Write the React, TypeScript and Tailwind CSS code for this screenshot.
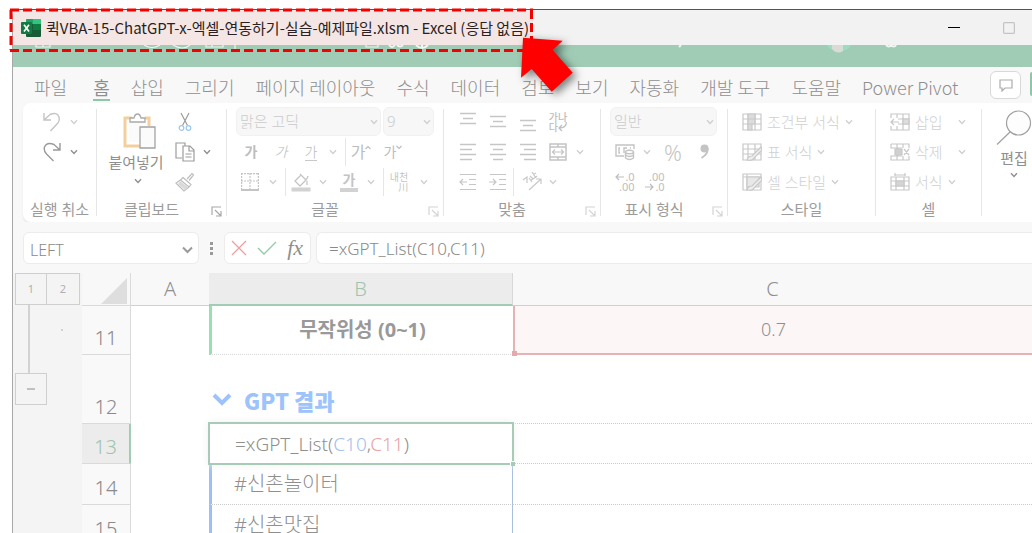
import React from "react";

type Kids = { children?: React.ReactNode };

function Svg({ w, h, className = "", sw = 1.2, children }: Kids & { w: number; h: number; className?: string; sw?: number }) {
  return (
    <svg width={w} height={h} viewBox={`0 0 ${w} ${h}`} fill="none" stroke="currentColor" strokeWidth={sw} className={`shrink-0 ${className}`} aria-hidden="true">
      {children}
    </svg>
  );
}

function Chevron({ className = "text-[#d0d0d0]" }: { className?: string }) {
  return (
    <Svg w={8} h={6} sw={1.4} className={className}>
      <path d="M1 1.2 4 4.4 7 1.2" />
    </Svg>
  );
}

function Tool({ label, className = "w-[30px]", children }: Kids & { label: string; className?: string }) {
  return (
    <button type="button" aria-label={label} className={`flex h-[30px] shrink-0 items-center justify-center ${className}`}>
      {children}
    </button>
  );
}

function Drop({ label, className = "w-[14px]", color }: { label: string; className?: string; color?: string }) {
  return (
    <Tool label={label} className={className}>
      <Chevron className={color} />
    </Tool>
  );
}

function Group({ title, className, launcher, launcherColor = "text-[#d4d4d4]", children }: Kids & { title: string; className: string; launcher?: boolean; launcherColor?: string }) {
  return (
    <section aria-label={title} className={`flex shrink-0 flex-col pt-1 ${className}`}>
      <div className="flex h-[92px] flex-col">{children}</div>
      <div className={`relative flex h-5 items-center justify-center text-[15px] leading-5 font-normal text-[#9b9b9b] ${launcher ? "pr-5" : ""}`}>
        {title}
        {launcher && (
          <button type="button" aria-label={`${title} 설정`} className={`absolute right-1 bottom-[2px] ${launcherColor}`}>
            <Svg w={11} h={11}>
              <path d="M1 9V1h9M4 4l5.5 5.5M10 5v5H5" />
            </Svg>
          </button>
        )}
      </div>
    </section>
  );
}

function Divider() {
  return <div className="mt-[6px] h-[107px] w-px shrink-0 bg-[#e6e6e6]" />;
}

function SmallDivider() {
  return <div className="h-7 w-px shrink-0 bg-[#e6e6e6]" />;
}

function Picker({ label, value, className }: { label: string; value: string; className: string }) {
  return (
    <div className={`relative h-[29px] shrink-0 ${className}`}>
      <select aria-label={label} defaultValue={value} className="h-full w-full appearance-none rounded-md border border-[#f1f1f1] bg-[#f7f7f7] pl-[3px] text-[15px] font-light text-[#cbcbcb]">
        <option>{value}</option>
      </select>
      <span className="pointer-events-none absolute top-3 right-[3px]">
        <Chevron />
      </span>
    </div>
  );
}

function Lines({ rows }: { rows: [number, number, number][] }) {
  return (
    <Svg w={18} h={20} sw={1.3} className="text-[#c6c6c6]">
      {rows.map(([y, a, b]) => (
        <path key={y} d={`M${a} ${y}.5H${b}`} />
      ))}
    </Svg>
  );
}

function GridIcon({ children }: Kids) {
  return (
    <Svg w={20} h={18} className="text-[#c8c8c8]">
      {children}
    </Svg>
  );
}

const tabs = ["파일", "홈", "삽입", "그리기", "페이지 레이아웃", "수식", "데이터", "검토", "보기", "자동화", "개발 도구", "도움말", "Power Pivot"];

function TitleBar() {
  return (
    <header className="relative flex h-[35px] shrink-0 items-center bg-[#f2f2f2]">
      <div className="flex h-full w-[520px] shrink-0 items-center gap-[5px] rounded-tl-md bg-[#f5e6e6] pl-2 font-['Noto_Sans_CJK_KR',sans-serif] text-[15px] leading-5 whitespace-nowrap text-[#2a1f22]">
        <svg width="20" height="18" viewBox="0 0 20 18" className="shrink-0" aria-hidden="true">
          <path fill="#21a366" d="M6 0h13a1 1 0 0 1 1 1v5H5V1a1 1 0 0 1 1-1" />
          <path fill="#33c481" d="M12 0h7a1 1 0 0 1 1 1v4h-8z" />
          <path fill="#107c41" d="M12 5h8v6h-8z" />
          <path fill="#185c37" d="M5 5h7v6h8v6a1 1 0 0 1-1 1H6a1 1 0 0 1-1-1z" />
          <rect y="3" width="11" height="12" rx="1" fill="#107c41" />
          <path stroke="#fff" strokeWidth="1.7" d="m3 5.8 5 6.6M8 5.8l-5 6.6" />
        </svg>
        <h1>퀵VBA-15-ChatGPT-x-엑셀-연동하기-실습-예제파일.xlsm - Excel (응답 없음)</h1>
      </div>
      <div className="-mr-1 ml-auto flex">
        <button type="button" aria-label="최소화" className="flex h-8 w-[55px] items-center justify-center text-black">
          <Svg w={12} h={12} sw={1}><path d="M0 5.5h12" /></Svg>
        </button>
        <button type="button" aria-label="최대화" className="flex h-8 w-[55px] items-center justify-center text-[#c4c4c4]">
          <Svg w={12} h={12}><rect x=".6" y=".6" width="10.8" height="10.8" rx="1" /></Svg>
        </button>
      </div>
    </header>
  );
}

function QuickBar() {
  return (
    <div className="h-[22px] shrink-0 overflow-hidden bg-[#a0ccb5]">
      <svg width="900" height="10" viewBox="0 0 900 10" fill="none" stroke="#eef7f1" strokeWidth="1.2" aria-hidden="true">
        <path d="M23 0v2h14V0M30 0v2M131 0q8 5 16 0M160 0q10 6 17 0M193 0v2h17V0M199 0v2M222 0v6M353 0v2h12V0" />
        <path d="M376 0q3 4 6 0M384 0q3 3 6 0M403 0q6 6 12 0M409 0v3M666 2l2-2" strokeWidth="2" />
        <path d="M873 0q3 3 5 0q3 3 5 0" strokeWidth="2" />
        <path d="M814 0a13 10 0 0 0 24 0z" fill="#96e0c0" stroke="none" />
        <path d="M819 0h11v6q-6 4-11-2z" fill="#d9dcd6" stroke="none" />
      </svg>
    </div>
  );
}

function TabBar() {
  return (
    <nav className="flex h-9 shrink-0 items-start bg-[#f8f8f8] pl-[21px]">
      <div className="flex gap-[21px] pt-2 font-['Noto_Sans_CJK_KR',sans-serif] text-[18px] leading-6 font-light whitespace-nowrap text-[#8f8f8f]">
        {tabs.map((t) => (
          <a key={t} href="#" className={t === "홈" ? "ml-[5px] border-b-2 border-[#8cc7a8] font-normal" : "border-b-2 border-transparent"}>
            {t}
          </a>
        ))}
      </div>
      <button type="button" aria-label="메모" className="mt-1 ml-auto flex h-7 w-[31px] shrink-0 items-center justify-center rounded-md border border-[#d8d8d8] bg-white text-[#ababab]">
        <Svg w={14} h={13}><path d="M1 1h12v8H6l-3 3V9H1z" /></Svg>
      </button>
      <button type="button" aria-label="공유" className="mt-[5px] ml-[9px] h-6 w-[2px] shrink-0 rounded-l bg-[#8cc7a8]" />
    </nav>
  );
}

const L = 1, R = 17;

function Ribbon() {
  return (
    <div className="ml-[10px] flex h-[119px] shrink-0 overflow-hidden rounded-l-lg bg-white shadow-[0_2px_2px_#e9e9e9]">
      <Group title="실행 취소" className="w-[73px]">
        <div className="flex pl-[14px]">
          <Tool label="실행 취소" className="w-[30px] text-[#c4c4c4]">
            <Svg w={20} h={20} sw={1.4}><path d="M2 1v7h7M2 8l6-5.500q7-3 9 2.500 1 4-2 7L8.500 19" /></Svg>
          </Tool>
          <Drop label="실행 취소 목록" />
        </div>
        <div className="flex pl-[14px]">
          <Tool label="다시 실행" className="w-[30px] text-[#999999]">
            <Svg w={20} h={20} sw={1.4}><path d="M18 1v7h-7M18 8l-6-5.500q-7-3-9.500 2.500-1 4 2 7l7 7" /></Svg>
          </Tool>
          <Drop label="다시 실행 목록" color="text-[#8f8f8f]" />
        </div>
      </Group>
      <Divider />
      <Group title="클립보드" className="w-[129px]" launcher launcherColor="text-[#a8a8a8]">
        <div className="flex pl-[9px]">
          <button type="button" className="flex w-[60px] flex-col items-center pt-[6px] text-[15px] leading-5 whitespace-nowrap text-[#8f8f8f]">
            <Svg w={34} h={37} sw={1.3} className="mb-[2px] ml-2">
              <path d="M9 5H2v28h15M22 5h4v8" stroke="#f3cf9e" strokeWidth="3" />
              <path d="M6 9v20h10V13h7V9z" fill="#fbfbfb" stroke="none" />
              <path d="M7 9V5h4q1-4 3.500-4T18 5h4v4z" fill="#fff" stroke="#aaa" />
              <path d="M17 14h15v21H17z" fill="#fbfbfb" stroke="#a3a3a3" />
            </Svg>
            붙여넣기
            <Chevron className="mt-[6px] ml-1 text-[#8f8f8f]" />
          </button>
          <div className="ml-[6px] flex flex-col">
            <Tool label="잘라내기" className="w-[26px] text-[#9c9c9c]">
              <Svg w={14} h={20}>
                <path d="M3 1l6.500 12.500M11 1 4.500 13.500" />
                <circle cx="3.500" cy="16" r="2.300" stroke="#9dc8ee" /><circle cx="10.500" cy="16" r="2.300" stroke="#9dc8ee" />
              </Svg>
            </Tool>
            <Tool label="복사" className="w-[26px] text-[#9c9c9c]">
              <Svg w={20} h={20}>
                <path d="M7 16H1V1h9v3M8 4h7l4 4v11H8zM14 4v5h5M10.500 12h6M10.500 15h6" />
              </Svg>
            </Tool>
            <Tool label="서식 복사" className="w-[26px] text-[#bdbdbd]">
              <Svg w={20} h={20}>
                <path d="m12 7 5-5.500 1.500 1.500L14 8.500M8 5.500l8 7-2 2.500-8.500-7zM5.500 8 1 11l8 8 5-4" />
                <path d="m3 12 7 6 3-3-8-6z" fill="#dadada" stroke="none" />
              </Svg>
            </Tool>
          </div>
          <Drop label="복사 옵션" className="mt-[30px] w-[18px]" color="text-[#8f8f8f]" />
        </div>
      </Group>
      <Divider />
      <Group title="글꼴" className="w-[216px]" launcher>
        <div className="flex h-[30px] gap-[2px] pl-[9px]">
          <Picker label="글꼴" value="맑은 고딕" className="w-[145px]" />
          <Picker label="글꼴 크기" value="9" className="w-[51px]" />
        </div>
        <div className="flex items-center pl-[9px] text-[14px] leading-4 text-[#bdbdbd]">
          <Tool label="굵게"><b>가</b></Tool>
          <Tool label="기울임꼴"><i className="font-light">가</i></Tool>
          <Tool label="밑줄"><span className="border-b border-[#c8c8c8] font-light">가</span></Tool>
          <Drop label="밑줄 종류" className="mr-[5px] w-[14px]" />
          <SmallDivider />
          <Tool label="글꼴 크기 크게"><span className="text-[16px]">가</span><Svg w={6} h={14}><path d="M.5 4 3 1.500 5.500 4" /></Svg></Tool>
          <Tool label="글꼴 크기 작게" className="w-[34px]">가<Svg w={6} h={14}><path d="M.5 1 3 3.500 5.500 1" /></Svg></Tool>
        </div>
        <div className="flex items-center pl-[9px] text-[#c4c4c4]">
          <Tool label="테두리" className="w-7">
            <Svg w={18} h={18}>
              <path d="M.6 0v16M9 0v16M17.400 0v16M0 .6h18M0 8h18" strokeDasharray="2 1" /><path d="M0 17h18" strokeWidth="2" />
            </Svg>
          </Tool>
          <Drop label="테두리 종류" className="mr-[3px] w-[18px]" />
          <SmallDivider />
          <Tool label="채우기 색">
            <Svg w={20} h={20} sw={1.3}>
              <path d="m9 2 6 6-6 6-5-5 6-6M15 8q2-3 2-4M16 9v4" /><path d="M.5 17.500h19" strokeWidth="4" stroke="#d2d2d2" />
            </Svg>
          </Tool>
          <Drop label="채우기 색 목록" className="mr-1 w-[14px]" />
          <Tool label="글꼴 색">
            <span className="border-b-4 border-[#d2d2d2] px-[3px] text-[14px] leading-4 font-bold">가</span>
          </Tool>
          <Drop label="글꼴 색 목록" className="mr-[5px] w-[14px]" />
          <SmallDivider />
          <Tool label="윗주">
            <span className="flex flex-col items-end text-[10px] leading-[10px]"><span>내천</span><span>川</span></span>
          </Tool>
          <Drop label="윗주 옵션" className="w-5" />
        </div>
      </Group>
      <Divider />
      <Group title="맞춤" className="w-[156px]" launcher>
        <div className="flex pl-[9px]">
          <Tool label="위쪽 맞춤"><Lines rows={[[1, L, R], [6, 4, 14], [11, L, R]]} /></Tool>
          <Tool label="가운데 맞춤"><Lines rows={[[4, L, R], [9, 4, 14], [14, L, R]]} /></Tool>
          <Tool label="아래쪽 맞춤"><Lines rows={[[8, L, R], [13, 4, 14], [18, L, R]]} /></Tool>
          <Tool label="텍스트 줄 바꿈">
            <span className="flex flex-col text-[10px] leading-[10px] font-medium text-[#bdbdbd]">
              <span>가나</span>
              <span className="flex">다<Svg w={9} h={10}><path d="M8.400 0q0 6-7 6M4 3 1 6l3 3" /></Svg></span>
            </span>
          </Tool>
        </div>
        <div className="flex pl-[9px]">
          <Tool label="왼쪽 맞춤"><Lines rows={[[2, L, R], [7, L, 13], [12, L, R], [17, L, 13]]} /></Tool>
          <Tool label="가운데"><Lines rows={[[2, L, R], [7, 4, 14], [12, L, R], [17, 4, 14]]} /></Tool>
          <Tool label="오른쪽 맞춤"><Lines rows={[[2, L, R], [7, 5, R], [12, L, R], [17, 5, R]]} /></Tool>
          <Tool label="병합하고 가운데 맞춤">
            <Svg w={18} h={18} className="text-[#c4c4c4]">
              <path d="M1 1h16v16H1zM1 4h16M1 14h16M9 1v3M9 14v3" strokeWidth="1.500" /><path d="M3.500 9h11M6 6.500 3.500 9 6 11.500M12 6.500 14.500 9 12 11.500" />
            </Svg>
          </Tool>
          <Drop label="병합 옵션" />
        </div>
        <div className="flex items-center pl-[9px]">
          <Tool label="내어쓰기">
            <Svg w={18} h={18} className="text-[#c6c6c6]"><path d="M1 1.500h16M10 6.500h7M10 11.500h7M1 16.500h16M1 9h7M4 6 1 9l3 3" /></Svg>
          </Tool>
          <Tool label="들여쓰기">
            <Svg w={18} h={18} className="text-[#c6c6c6]"><path d="M1 1.500h16M10 6.500h7M10 11.500h7M1 16.500h16M0 9h7M4 6l3 3-3 3" /></Svg>
          </Tool>
          <SmallDivider />
          <Tool label="방향" className="ml-1 w-7">
            <Svg w={22} h={20} className="text-[#c8c8c8]">
              <path d="M8 18 20 7M15 7h5v5M2 8l4-3v6M8 6l3 4M10 8l2-1M9 4l3 3 4-3M11 0l4 6M13 2l2-1" />
            </Svg>
          </Tool>
          <Drop label="방향 옵션" />
        </div>
      </Group>
      <Divider />
      <Group title="표시 형식" className="w-[126px]" launcher>
        <div className="h-[30px] pl-[9px]">
          <Picker label="표시 형식" value="일반" className="w-[107px]" />
        </div>
        <div className="flex items-center pl-[9px] text-[#c4c4c4]">
          <Tool label="통화">
            <Svg w={20} h={18} sw={1.4}>
              <path d="M9 13H1V2h18v4M5 5H4v5h1M12 5H9v5M16 5h-1" /><ellipse cx="14.500" cy="9" rx="4" ry="1.800" fill="#fff" /><path d="M10.500 9v6q4 3 8 0V9M10.500 12q4 3 8 0" />
            </Svg>
          </Tool>
          <Drop label="통화 종류" className="mr-1 w-[14px]" />
          <Tool label="백분율"><span className="text-[22px] leading-6 font-light">%</span></Tool>
          <Tool label="쉼표" className="w-[34px]">
            <Svg w={10} h={16}><circle cx="4.500" cy="4.500" r="4" fill="currentColor" stroke="none" /><path d="M7.500 4q1 6-6 10" strokeWidth="2" /></Svg>
          </Tool>
        </div>
        <div className="flex items-center pl-[9px] text-[11px] leading-[10px] text-[#bdbdbd]">
          <Tool label="자릿수 늘림">
            <span className="flex flex-col items-end"><span className="flex items-center"><Svg w={10} h={8}><path d="M1 4h8M4 1 1 4l3 3" /></Svg>.0</span><span>.00</span></span>
          </Tool>
          <Tool label="자릿수 줄임">
            <span className="flex flex-col items-end"><span>.00</span><span className="flex items-center"><Svg w={10} h={8}><path d="M0 4h8M5 1l3 3-3 3" /></Svg>.0</span></span>
          </Tool>
        </div>
      </Group>
      <Divider />
      <Group title="스타일" className="w-[147px] text-[15px] font-light text-[#d0d0d0]">
        <button type="button" className="flex h-[30px] items-center gap-[5px] pl-[14px]">
          <GridIcon><path d="M1 1h18v16H1zM1 6h18M1 11h18M6 1v16M13 1v16" /><path d="M6 1h7v5H6zM6 11h4v6H6zM6 6h7v5H6z" fill="#dcdcdc" /></GridIcon>
          조건부 서식<Chevron />
        </button>
        <button type="button" className="flex h-[30px] items-center gap-[5px] pl-[14px]">
          <GridIcon><path d="M1 1h18v16H1zM1 6h18M1 11h18M6 1v16M13 1v16" /><path d="m19 4-9 9q-4 0-5 4 6 1 7-2l8-8z" fill="#eee" /></GridIcon>
          표 서식<Chevron />
        </button>
        <button type="button" className="flex h-[30px] items-center gap-[5px] pl-[14px]">
          <GridIcon><path d="M1 1h18v16H1zM1 4h18M5 1v16" /><path d="M5 4h12v10H5z" fill="#e8e8e8" /><path d="m19 4-9 9q-4 0-5 4 6 1 7-2l8-8z" fill="#eee" /></GridIcon>
          셀 스타일<Chevron />
        </button>
      </Group>
      <Divider />
      <Group title="셀" className="w-[105px] text-[15px] font-light text-[#d0d0d0]">
        <button type="button" className="flex h-[30px] items-center gap-[5px] pl-[14px]">
          <GridIcon><path d="M1 5V1h18v16H1v-4M8 6h11M8 11h11M13 1v16M7 1v4M7 13v4M1 9h8M4 6 1 9l3 3" /><path d="M13 6h6v5h-6z" fill="#ddd" /></GridIcon>
          삽입<Chevron className="ml-[10px] text-[#d0d0d0]" />
        </button>
        <button type="button" className="flex h-[30px] items-center gap-[5px] pl-[14px]">
          <GridIcon><path d="M1 1h18v4M1 1v4h7v8H1v4h18v-4M1 5h11M1 13h11M7 1v16M13 1v4M13 13v4M14 6l5 6M19 6l-5 6" /><path d="M5 6h7v6H5z" fill="#d0d0d0" /></GridIcon>
          삭제<Chevron className="ml-[10px] text-[#d0d0d0]" />
        </button>
        <button type="button" className="flex h-[30px] items-center gap-[5px] pl-[14px]">
          <GridIcon><path d="M1 4h18v13H1zM1 8h18M1 13h18M6 4v13M14 4v13M5 2h10M5 0v3M15 0v3" /><path d="M6 8h8v5H6z" fill="#d4d4d4" /></GridIcon>
          서식<Chevron />
        </button>
      </Group>
      <Divider />
      <button type="button" className="flex w-[64px] shrink-0 flex-col items-center pt-[7px] text-[15px] leading-5 text-[#8f8f8f]">
        <Svg w={36} h={36} sw={1.2} className="mb-[2px] text-[#a0a0a0]">
          <circle cx="22.500" cy="13" r="12" fill="#fdfdfd" /><path d="M14 22 1 34.500" />
        </Svg>
        편집
        <Chevron className="mt-1 text-[#8f8f8f]" />
      </button>
    </div>
  );
}

function FormulaBar() {
  return (
    <div className="flex h-[51px] shrink-0 items-start bg-[#f8f8f8] pt-[10px] pl-[10px]">
      <div className="flex h-8 w-[176px] shrink-0 items-center rounded-md border border-[#ececec] bg-white">
        <input aria-label="이름 상자" defaultValue="LEFT" className="w-0 flex-1 pt-[3px] pl-[6px] text-[16px] leading-6 font-light text-[#8a8a8a] outline-none" />
        <button type="button" aria-label="이름 목록" className="flex w-4 items-center pt-[3px] text-[#9a9a9a]">
          <Svg w={11} h={8} sw={2}><path d="m1 1.500 4.500 4.500L10 1.500" /></Svg>
        </button>
      </div>
      <div className="flex h-8 w-[25px] shrink-0 items-center justify-center text-[#9a9a9a]">
        <Svg w={3} h={13} sw={3}><path d="M1.500 0v3M1.500 5v3M1.500 10v3" /></Svg>
      </div>
      <div className="flex h-8 w-[87px] shrink-0 items-center rounded-md border border-[#ececec] bg-white">
        <button type="button" aria-label="취소" className="flex w-[28px] justify-center text-[#f0a0a0]">
          <Svg w={16} h={16} sw={1.4}><path d="m1 1 14 14M15 1 1 15" /></Svg>
        </button>
        <button type="button" aria-label="입력" className="flex w-[28px] justify-center text-[#93cba8]">
          <Svg w={20} h={14} sw={1.4}><path d="m1 7 6 6L19 1" /></Svg>
        </button>
        <button type="button" aria-label="함수 삽입" className="flex w-[30px] justify-center font-['Liberation_Serif',serif] text-[22px] leading-6 text-[#8f8f8f] italic">
          fx
        </button>
      </div>
      <input aria-label="수식 입력줄" defaultValue="=xGPT_List(C10,C11)" className="ml-[5px] h-8 w-0 flex-1 rounded-l-md border-y border-l border-[#ececec] bg-white pl-3 text-[17px] font-light text-[#8a8a8a] outline-none" />
    </div>
  );
}

function RowHead({ n, active }: { n: number; active?: boolean }) {
  return (
    <th
      scope="row"
      className={
        active
          ? "border-r-2 border-b border-r-[#a3ccb5] border-b-[#dadada] bg-[#ececec] pb-1 align-bottom text-[20px] leading-6 font-light text-[#9fc4ae]"
          : "border-r border-b border-[#dadada] bg-[#f9f9f9] pb-1 align-bottom text-[20px] leading-6 font-light text-[#8a8a8a]"
      }
    >
      {n}
    </th>
  );
}

function Sheet() {
  return (
    <main className="flex min-h-0 flex-1 overflow-hidden bg-white">
      <aside className="flex w-[69px] shrink-0 flex-col bg-[#f4f4f4] pl-[2px] text-[11px] text-[#b0b0b0]">
        <div className="flex">
          <button type="button" className="h-8 w-8 border border-[#cfcfcf]">1</button>
          <button type="button" className="h-8 w-[33px] border border-l-0 border-[#cfcfcf]">2</button>
        </div>
        <div className="ml-[13px] flex h-[68px] w-8 items-start border-l-2 border-[#d2d2d2] pt-6 pl-[31px]">
          <span className="h-[2px] w-[2px] shrink-0 bg-[#d2d2d2]" />
        </div>
        <button type="button" aria-label="그룹 접기" className="flex h-8 w-8 items-center justify-center border border-[#cfcfcf]">
          <span className="h-[2px] w-2 bg-[#c0c0c0]" />
        </button>
      </aside>
      <table className="w-0 flex-1 table-fixed border-separate border-spacing-0 self-start text-[#8f8f8f]">
        <colgroup>
          <col className="w-[49px]" />
          <col className="w-[78px]" />
          <col className="w-[304px]" />
          <col />
        </colgroup>
        <thead>
          <tr className="h-[33px] text-[20px] leading-6">
            <td className="border-r border-b border-[#dadada] bg-[#f8f8f8]">
              <Svg w={26} h={26} className="mt-1 ml-auto mr-[3px]"><path d="M26 0v26H0z" fill="#dedede" stroke="none" /></Svg>
            </td>
            <th scope="col" className="border-b border-[#d0d0d0] bg-[#f8f8f8] font-light">A</th>
            <th scope="col" className="border-r border-b-2 border-r-[#d8d8d8] border-b-[#a3ccb5] bg-[#ececec] font-light text-[#9fc4ae]">B</th>
            <th scope="col" className="border-b border-[#d0d0d0] bg-[#f8f8f8] font-light">C</th>
          </tr>
        </thead>
        <tbody>
          <tr className="h-[49px]">
            <RowHead n={11} />
            <td />
            <td className="border-b border-l-3 border-b-[#d8d8d8] border-l-[#99dfb5] text-center text-[20px] leading-6 font-bold text-[#999999] [border-bottom-style:dotted]">무작위성 (0~1)</td>
            <td className="relative border-b-2 border-l-2 border-[#e5b3b5] bg-[#fdf6f6] text-center text-[18px] font-light">
              0.7
              <span className="absolute -bottom-[3px] -left-[3px] h-[5px] w-[5px] bg-[#e5a8ac]" />
            </td>
          </tr>
          <tr className="h-[69px]">
            <RowHead n={12} />
            <td />
            <td className="pt-5 pl-[3px]">
              <div className="flex items-center gap-3 font-['Noto_Sans_CJK_KR',sans-serif] text-[22px] leading-6 font-black text-[#9cc3fb]">
                <Svg w={20} h={14} sw={4}><path d="m2 2 8 8 8-8" /></Svg>
                GPT 결과
              </div>
            </td>
            <td className="border-b border-dotted border-[#cccccc]" />
          </tr>
          <tr className="h-10">
            <RowHead n={13} active />
            <td />
            <td className="relative pl-[26px] text-[19px] leading-6 font-light">
              =xGPT_List(<span className="text-[#a3bfe8]">C10</span>,<span className="text-[#e8a3a3]">C11</span>)
              <span className="pointer-events-none absolute -top-[2px] -right-px -bottom-px left-[-1px] border-2 border-[#a8cbb8] shadow-[0_0_8px_#f0f0f0]" />
              <span className="absolute -right-[2px] -bottom-[2px] h-[5px] w-[5px] border-t border-l border-white bg-[#a8cbb8]" />
            </td>
            <td className="border-b border-dotted border-[#cccccc]" />
          </tr>
          {[
            { n: 14, text: "#신촌놀이터" },
            { n: 15, text: "#신촌맛집" },
          ].map((r) => (
            <tr key={r.n} className="h-[41px]">
              <RowHead n={r.n} />
              <td />
              <td className="border-r border-b border-l-3 border-r-[#a8bfe0] border-b-[#cccccc] border-l-[#9cc0f5] pl-[22px] text-[20px] leading-6 font-light [border-bottom-style:dotted]">{r.text}</td>
              <td className="border-b border-dotted border-[#cccccc]" />
            </tr>
          ))}
        </tbody>
      </table>
    </main>
  );
}

function Callout() {
  return (
    <svg width="600" height="115" viewBox="0 0 600 115" fill="none" className="pointer-events-none absolute top-0 left-0" aria-hidden="true">
      <path d="M10 10H533M10 50.500H533" stroke="#f30000" strokeWidth="3" strokeDasharray="9 4" />
      <path d="M11 10v40M531.500 10v40" stroke="#f30000" strokeWidth="3" strokeDasharray="9 4" />
      <path d="M523 37.700 562.700 40.700 552.700 50 572.700 72.700 551.700 91.700 531.700 69 521 77.700z" fill="#ff0000" className="drop-shadow-[4px_3px_4px_rgba(0,0,0,0.5)]" />
    </svg>
  );
}

export default function App() {
  return (
    <div className="relative flex h-screen overflow-hidden bg-white pt-[9px] pl-3 font-['Noto_Sans','Noto_Sans_CJK_KR',sans-serif]">
      <div className="flex min-w-0 flex-1 flex-col rounded-tl-lg border-t border-l border-t-[#555555] border-l-[#a8a8a8] bg-[#f8f8f8]">
        <TitleBar />
        <QuickBar />
        <TabBar />
        <Ribbon />
        <FormulaBar />
        <Sheet />
      </div>
      <Callout />
    </div>
  );
}
